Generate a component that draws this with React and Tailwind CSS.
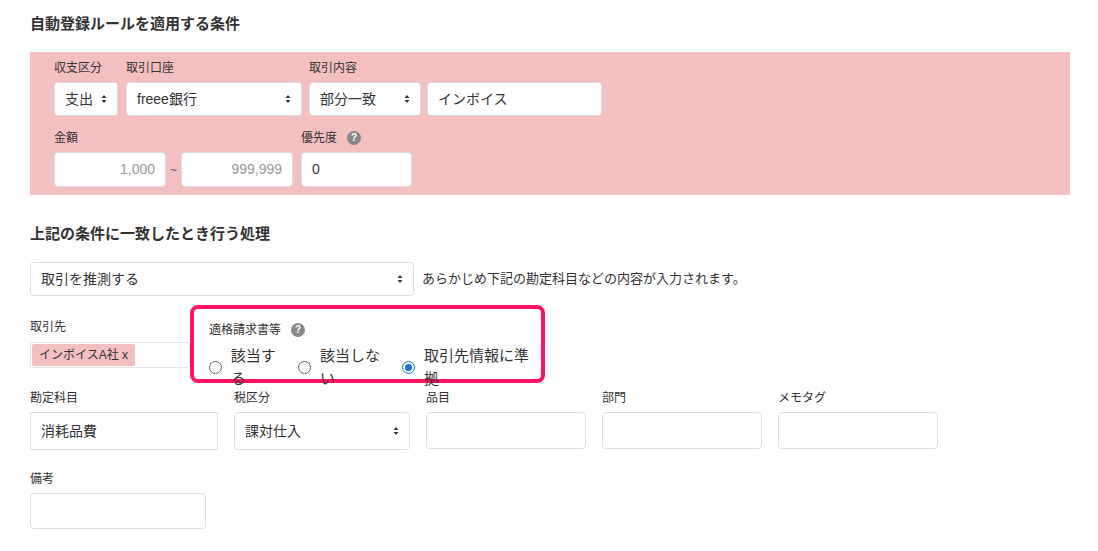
import React from "react";

const F = { fontFamily: '"Liberation Sans","Noto Sans CJK JP",sans-serif' };

function Arrows() {
  return (
    <svg width="6" height="10" viewBox="0 0 6 10" className="shrink-0">
      <path d="M3 1 L5.5 4 H0.5Z M3 9 L5.5 6 H0.5Z" fill="#333" />
    </svg>
  );
}
function Sel({ w, text, h = "h-[34px]" }) {
  return (
    <div className={`${w} ${h} bg-white rounded-[4px] border border-[#ddd] flex items-center justify-between px-[10px] text-[14px] text-[#333]`}>
      <span>{text}</span>
      <Arrows />
    </div>
  );
}
function Inp({ w, text = "", right = false, h = "h-[35px]", cls = "" }) {
  return (
    <div className={`${w} ${h} bg-white rounded-[4px] border border-[#ddd] flex items-center px-[10px] text-[14px] ${right ? "justify-end text-[#999]" : "text-[#333]"} ${cls}`}>
      {text}
    </div>
  );
}
function Q() {
  return (
    <span className="inline-flex w-[14px] h-[14px] rounded-full bg-[#888] text-white text-[10px] font-bold items-center justify-center ml-[10px]">?</span>
  );
}
function Radio({ on }) {
  return (
    <span className={`inline-block w-[13px] h-[13px] rounded-full border ${on ? "border-[#1a73e8] bg-white" : "border-[#666] bg-white"} relative`}>
      {on && <span className="absolute inset-[2px] rounded-full bg-[#1a73e8]" />}
    </span>
  );
}
const L = "text-[12px] text-[#333] h-[14px] leading-[14px]";

export default function App() {
  return (
    <div style={F} className="w-[1098px] h-[551px] bg-white relative overflow-hidden text-[#333]">
      <div className="pl-[30px] pt-[13px]">
        <div className="text-[15px] font-bold h-[20px]">自動登録ルールを適用する条件</div>
        <div className="mt-[19px] w-[1040px] h-[143px] bg-[#f4bfbf] pl-[24px] pt-[9px]">
          <div className="flex gap-[8px]">
            <div><div className={L}>収支区分</div><div className="mt-[7px]"><Sel w="w-[64px]" text="支出" /></div></div>
            <div><div className={L}>取引口座</div><div className="mt-[7px]"><Sel w="w-[176px]" text="freee銀行" /></div></div>
            <div className="ml-[-1px]"><div className={L}>取引内容</div><div className="mt-[7px] flex gap-[6px]"><Sel w="w-[112px]" text="部分一致" /><Inp w="w-[175px]" h="h-[34px]" text="インボイス" /></div></div>
          </div>
          <div className="flex mt-[15px] items-end">
            <div>
              <div className={L}>金額</div>
              <div className="mt-[7px] flex items-center">
                <Inp w="w-[112px]" right text="1,000" />
                <span className="w-[15px] text-center text-[12px] text-[#555]">~</span>
                <Inp w="w-[112px]" right text="999,999" />
              </div>
            </div>
            <div className="ml-[8px]">
              <div className={`${L} flex items-center`}>優先度<Q /></div>
              <div className="mt-[7px]"><Inp w="w-[111px]" text="0" /></div>
            </div>
          </div>
        </div>
        <div className="mt-[28px] text-[15px] font-bold h-[20px]">上記の条件に一致したとき行う処理</div>
        <div className="mt-[19px] flex items-center gap-[8px]">
          <Sel w="w-[384px]" text="取引を推測する" />
          <span className="text-[13px]">あらかじめ下記の勘定科目などの内容が入力されます。</span>
        </div>
        <div className="mt-[24px]">
          <div className={L}>取引先</div>
          <div className="mt-[8px] w-[160px] h-[26px] border border-[#e5e5e5] rounded-[3px] bg-white p-[1px] flex">
            <span className="bg-[#f4bfbf] text-[12px] px-[7px] flex items-center rounded-[2px]">インボイスA社 x</span>
          </div>
        </div>
        <div className="mt-[23px] flex gap-[16px]">
          <div><div className={L}>勘定科目</div><div className="mt-[7px]"><Inp w="w-[188px]" h="h-[38px]" text="消耗品費" cls="rounded-none border-[#ddd]" /></div></div>
          <div><div className={L}>税区分</div><div className="mt-[7px]"><Sel w="w-[176px]" h="h-[38px]" text="課対仕入" /></div></div>
          <div><div className={L}>品目</div><div className="mt-[7px]"><Inp w="w-[160px]" h="h-[37px]" /></div></div>
          <div><div className={L}>部門</div><div className="mt-[7px]"><Inp w="w-[160px]" h="h-[37px]" /></div></div>
          <div><div className={L}>メモタグ</div><div className="mt-[7px]"><Inp w="w-[160px]" h="h-[37px]" /></div></div>
        </div>
        <div className="mt-[22px]">
          <div className={L}>備考</div>
          <div className="mt-[7px]"><Inp w="w-[176px]" h="h-[36px]" /></div>
        </div>
      </div>
      <div className="absolute left-[190px] top-[305px] w-[355px] h-[78px] border-[4px] border-[#ff1464] rounded-[8px] bg-white pl-[15px] pt-[14px]">
        <div className={`${L} flex items-center`}>適格請求書等<Q /></div>
        <div className="mt-[8px] flex items-center text-[15px]">
          <Radio /><span className="ml-[9px] mr-[9px]">該当する</span>
          <Radio /><span className="ml-[9px] mr-[9px]">該当しない</span>
          <Radio on /><span className="ml-[9px]">取引先情報に準拠</span>
        </div>
      </div>
    </div>
  );
}
